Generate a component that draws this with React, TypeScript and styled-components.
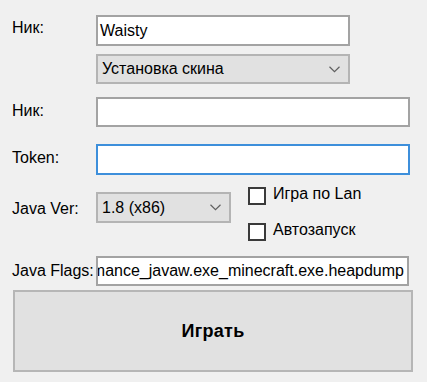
import React from "react";
import styled, { createGlobalStyle } from "styled-components";

const Global = createGlobalStyle`
  html, body { margin: 0; padding: 0; background: #f0f0f0; }
  body { font-family: "Liberation Sans", Arial, sans-serif; font-size: 16px; color: #000; }
  * { box-sizing: border-box; }
`;

const Form = styled.div`
  width: 427px;
  height: 382px;
  padding: 15px 0 0 12px;
  display: flex;
  flex-direction: column;
  background: #f0f0f0;
`;

const Row = styled.div<{ $mt?: number; $align?: string }>`
  display: flex;
  align-items: ${(p) => p.$align ?? "center"};
  margin-top: ${(p) => p.$mt ?? 0}px;
`;

const Label = styled.div<{ $dy?: number }>`
  width: 84px;
  flex: none;
  white-space: nowrap;
  line-height: 18px;
  position: relative;
  top: ${(p) => p.$dy ?? 0}px;
`;

const TextBox = styled.div<{ $w: number; $h?: number; $focus?: boolean }>`
  width: ${(p) => p.$w}px;
  height: ${(p) => p.$h ?? 30}px;
  background: #fff;
  border: 2px solid ${(p) => (p.$focus ? "#3d8fdb" : "#a3a3a3")};
  display: flex;
  align-items: center;
  padding: 0 2px;
  overflow: hidden;
  white-space: nowrap;
`;

const FlagsBox = styled(TextBox)`
  justify-content: flex-end;
  padding: 0 3px 0 0;
`;

const Combo = styled.div<{ $w: number; $h?: number; $mt?: number }>`
  width: ${(p) => p.$w}px;
  height: ${(p) => p.$h ?? 30}px;
  margin-top: ${(p) => p.$mt ?? 0}px;
  background: #e1e1e1;
  border: 2px solid #b4b4b4;
  display: flex;
  align-items: center;
  justify-content: space-between;
  padding: 0 8px 0 4px;
  white-space: nowrap;
`;

const Checks = styled.div`
  display: flex;
  flex-direction: column;
  gap: 18px;
  margin-left: 17px;
`;

const CheckRow = styled.div`
  display: flex;
  align-items: center;
  gap: 7px;
  height: 18px;
`;

const Box = styled.div`
  width: 18px;
  height: 18px;
  background: #fff;
  border: 2px solid #3a3a3a;
`;

const CheckText = styled.span`
  position: relative;
  top: -2px;
`;

const PlayButton = styled.div`
  margin-top: 4px;
  margin-left: 1px;
  width: 400px;
  height: 82px;
  background: #e1e1e1;
  border: 2px solid #b6b6b6;
  display: flex;
  align-items: center;
  justify-content: center;
  font-weight: bold;
  font-size: 18px;
  letter-spacing: 0.3px;
`;

const Chevron = () => (
  <svg width="11" height="7" viewBox="0 0 11 7">
    <path d="M0.5 0.8 L5.5 5.6 L10.5 0.8" fill="none" stroke="#5f5f5f" strokeWidth="1.2" />
  </svg>
);

export default function App() {
  return (
    <>
      <Global />
      <Form>
        <Row>
          <Label $dy={-3}>Ник:</Label>
          <TextBox $w={254} $h={31}>Waisty</TextBox>
        </Row>
        <Row $mt={8}>
          <Label />
          <Combo $w={254}>
            <span>Установка скина</span>
            <Chevron />
          </Combo>
        </Row>
        <Row $mt={13}>
          <Label $dy={-1}>Ник:</Label>
          <TextBox $w={314} />
        </Row>
        <Row $mt={17}>
          <Label $dy={-2}>Token:</Label>
          <TextBox $w={314} $h={31} $focus />
        </Row>
        <Row $mt={12} $align="flex-start">
          <Label $dy={13}>Java Ver:</Label>
          <Combo $w={135} $h={31} $mt={5}>
            <span>1.8 (x86)</span>
            <Chevron />
          </Combo>
          <Checks>
            <CheckRow>
              <Box />
              <CheckText>Игра по Lan</CheckText>
            </CheckRow>
            <CheckRow>
              <Box />
              <CheckText>Автозапуск</CheckText>
            </CheckRow>
          </Checks>
        </Row>
        <Row $mt={15}>
          <Label>Java Flags:</Label>
          <FlagsBox $w={313}>
            <span>-XX:HeapDumpPath=MojangTricksIntelDriversForPerformance_javaw.exe_minecraft.exe.heapdump</span>
          </FlagsBox>
        </Row>
        <PlayButton>Играть</PlayButton>
      </Form>
    </>
  );
}
